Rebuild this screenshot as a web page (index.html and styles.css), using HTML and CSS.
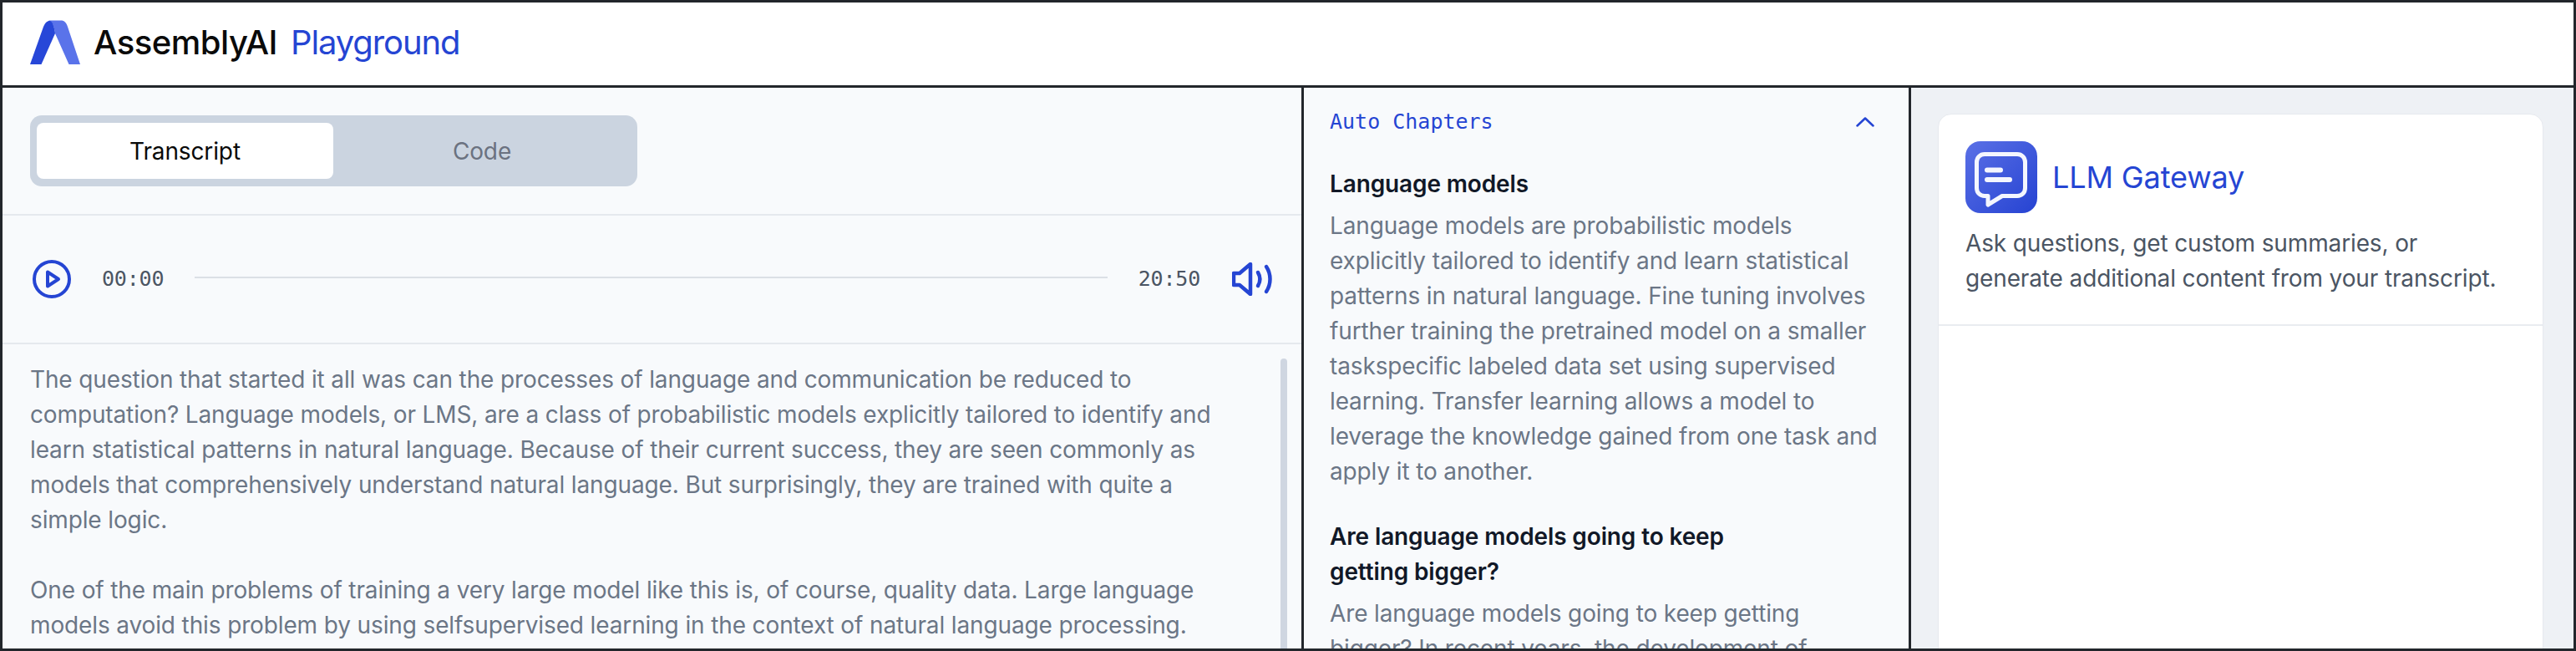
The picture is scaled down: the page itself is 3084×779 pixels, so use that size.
FILE: index.html
```html
<!DOCTYPE html>
<html>
<head>
    <title>AssemblyAI Playground</title>
    <link rel="stylesheet" href="styles.css">
</head>
<body>
    <div class="app">
        <header class="topbar">
            <svg class="logo" viewBox="0 0 60 53" width="60" height="53">
                <path fill="#5a73ea" d="M22 0.500H37C41 0.500 43.500 3 45 8L60 53H46.500L30 16C29 8 27 2 22 0.500Z"/>
                <path fill="#2747d8" d="M0 53L16 8C18 3 21 0.500 24 1C27 2 29 8 30 16L13.500 53Z"/>
            </svg>
            <span class="brand">AssemblyAI</span>
            <span class="brand-sub">Playground</span>
        </header>

        <main class="panels">
            <section class="panel-left">
                <div class="tabs-row">
                    <div class="tabs">
                        <div class="tab active">Transcript</div>
                        <div class="tab">Code</div>
                    </div>
                </div>

                <div class="player">
                    <svg class="play-icon" viewBox="0 0 48 48" width="48" height="48" fill="none" stroke="#2545d3" stroke-width="4" stroke-linejoin="round">
                        <circle cx="24" cy="24" r="21"/>
                        <path d="M19 15.500V32.500L32 24Z"/>
                    </svg>
                    <span class="time">00:00</span>
                    <div class="track"></div>
                    <span class="time">20:50</span>
                    <svg class="volume-icon" viewBox="0 0 48 40" width="48" height="40" fill="none" stroke="#2545d3" stroke-width="4.500" stroke-linecap="round" stroke-linejoin="round">
                        <path d="M2 13H9L22 2V38L9 27H2Z"/>
                        <path d="M31 12C34 17 34 23 31 28"/>
                        <path d="M41 5C47 14 47 26 41 35"/>
                    </svg>
                </div>

                <div class="transcript">
                    <div class="scroll-thumb"></div>
                    <p>The question that started it all was can the processes of language and communication be reduced to computation? Language models, or LMS, are a class of probabilistic models explicitly tailored to identify and learn statistical patterns in natural language. Because of their current success, they are seen commonly as models that comprehensively understand natural language. But surprisingly, they are trained with quite a simple logic.</p>
                    <p>One of the main problems of training a very large model like this is, of course, quality data. Large language models avoid this problem by using selfsupervised learning in the context of natural language processing. As a result, the model learns from the data itself.</p>
                </div>
            </section>

            <section class="panel-mid">
                <div class="chapters-head">
                    <span class="chapters-title">Auto Chapters</span>
                    <svg class="chevron" viewBox="0 0 22 12" width="22" height="12" fill="none" stroke="#2545d3" stroke-width="2.500" stroke-linecap="round" stroke-linejoin="round">
                        <path d="M1.500 10.500L11 1.500L20.500 10.500"/>
                    </svg>
                </div>
                <div class="chapter">
                    <h3>Language models</h3>
                    <p>Language models are probabilistic models explicitly tailored to identify and learn statistical patterns in natural language. Fine tuning involves further training the pretrained model on a smaller taskspecific labeled data set using supervised learning. Transfer learning allows a model to leverage the knowledge gained from one task and apply it to another.</p>
                </div>
                <div class="chapter">
                    <h3>Are language models going to keep<br>getting bigger?</h3>
                    <p>Are language models going to keep getting bigger? In recent years, the development of</p>
                </div>
            </section>

            <section class="panel-right">
                <div class="card">
                    <div class="card-top">
                        <div class="card-title">
                            <svg class="gateway-icon" viewBox="0 0 86 86" width="86" height="86">
                                <defs>
                                    <linearGradient id="gw" x1="0" y1="0" x2="1" y2="1">
                                        <stop offset="0" stop-color="#5a70e6"/>
                                        <stop offset="1" stop-color="#2643d2"/>
                                    </linearGradient>
                                </defs>
                                <rect width="86" height="86" rx="18" fill="url(#gw)"/>
                                <path fill="none" stroke="#f4f6fe" stroke-width="5" stroke-linejoin="round" d="M23 15.500H62C67.500 15.500 71.500 19.500 71.500 25V56C71.500 61.500 67.500 65.500 62 65.500H44L27 76V65.500H23C17.500 65.500 13.500 61.500 13.500 56V25C13.500 19.500 17.500 15.500 23 15.500Z"/>
                                <path fill="none" stroke="#f4f6fe" stroke-width="6" stroke-linecap="round" d="M26 34.500H42M26 46H53"/>
                            </svg>
                            <span>LLM Gateway</span>
                        </div>
                        <p>Ask questions, get custom summaries, or generate additional content from your transcript.</p>
                    </div>
                </div>
            </section>
        </main>
    </div>
</body>
</html>
```

FILE: styles.css
```css
* {
    box-sizing: border-box;
}
html, body {
    margin: 0;
    height: 100%;
}
body {
    font-family: Inter, "Liberation Sans", sans-serif;
    font-size: 28px;
    line-height: 42px;
    letter-spacing: -0.13px;
    color: #6b7686;
    background: #f8fafc;
    overflow: hidden;
}
p, h3 {
    margin: 0;
}

.app {
    height: 779px;
    display: flex;
    flex-direction: column;
    border: 3px solid #22262b;
    overflow: hidden;
}

.topbar {
    height: 102px;
    flex: none;
    display: flex;
    align-items: center;
    padding: 0 0 4px 33px;
    background: white;
    border-bottom: 3px solid #22262b;
}
.logo {
    margin-right: 16px;
}
.brand {
    font-size: 40px;
    font-weight: 500;
    letter-spacing: -0.5px;
    color: #0a0a0a;
    margin-right: 16px;
}
.brand-sub {
    font-size: 40px;
    letter-spacing: -1.1px;
    color: #2545d3;
}

.panels {
    flex: 1;
    min-height: 0;
    display: flex;
}
.panel-left {
    width: 1558px;
    flex: none;
    border-right: 3px solid #22262b;
    display: flex;
    flex-direction: column;
}
.panel-mid {
    width: 727px;
    flex: none;
    padding: 15px 30px 0 31px;
    border-right: 3px solid #22262b;
}
.panel-right {
    flex: 1;
    padding: 31px 36px 0 32px;
    background: #eef1f5;
}

.tabs-row {
    height: 153px;
    flex: none;
    padding: 33px 0 0 33px;
    border-bottom: 2px solid #e5e9ee;
}
.tabs {
    width: 727px;
    height: 85px;
    display: flex;
    padding: 9px 8px;
    background: #cbd4e0;
    border-radius: 14px;
}
.tab {
    width: 355px;
    display: flex;
    align-items: center;
    justify-content: center;
    border-radius: 8px;
    color: #6b7280;
}
.tab.active {
    background: white;
    color: #0a0a0a;
}
.tab:last-child {
    flex: 1;
}

.player {
    height: 154px;
    flex: none;
    display: flex;
    align-items: center;
    padding: 0 35px 0 35px;
    border-bottom: 2px solid #e5e9ee;
}
.time {
    font-family: "DejaVu Sans Mono", monospace;
    font-size: 25px;
    letter-spacing: -0.2px;
    color: #4b5563;
}
.play-icon {
    margin-right: 36px;
}
.track {
    flex: 1;
    height: 2px;
    margin: 0 37px 4px 37px;
    background: #dbe0e6;
}
.volume-icon {
    margin-left: 38px;
}

.transcript {
    position: relative;
    flex: 1;
    min-height: 0;
    overflow: hidden;
    padding: 21px 108px 0 33px;
}
.transcript p {
    margin-bottom: 42px;
}
.scroll-thumb {
    position: absolute;
    top: 17px;
    bottom: 0;
    left: 1530px;
    width: 8px;
    background: #cfd6e1;
    border-radius: 4px 4px 0 0;
}

.chapters-head {
    display: flex;
    align-items: center;
    justify-content: space-between;
    height: 52px;
    margin-right: 11px;
}
.chapters-title {
    font-family: "DejaVu Sans Mono", monospace;
    font-size: 25px;
    letter-spacing: 0;
    color: #2545d3;
}
.chapter {
    margin-bottom: 36px;
}
.chapter h3 {
    font-size: 28px;
    font-weight: 600;
    color: #111827;
}
.chapters-head + .chapter {
    margin-top: 27px;
}
.chapter p {
    margin-top: 8px;
}

.card {
    height: 800px;
    background: white;
    border: 1px solid #e6e9ee;
    border-radius: 16px;
}
.card-top {
    padding: 32px 44px 30px 32px;
    height: 253px;
    border-bottom: 2px solid #e9ecf0;
}
.card-title {
    display: flex;
    align-items: center;
    gap: 18px;
    font-size: 36px;
    color: #2545d3;
}
.card-top p {
    margin-top: 15px;
    color: #4b5563;
}
```
